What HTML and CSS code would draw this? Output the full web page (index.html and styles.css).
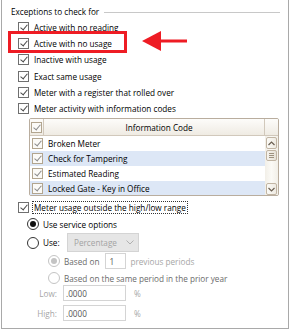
FILE: index.html
```html
<!DOCTYPE html>
<html>
<head>
<meta charset="utf-8">
<link rel="stylesheet" href="styles.css">
</head>
<body>
<div class="panel">
  <div class="group-title">
    <span class="title-text">Exceptions to check for</span>
    <span class="title-line"></span>
  </div>
  <div class="checks">
    <div class="row"><span class="cb"></span><span>Active with no reading</span></div>
    <div class="row"><span class="cb"></span><span>Active with no usage</span></div>
    <div class="row"><span class="cb"></span><span>Inactive with usage</span></div>
    <div class="row"><span class="cb"></span><span>Exact same usage</span></div>
    <div class="row"><span class="cb"></span><span>Meter with a register that rolled over</span></div>
    <div class="row"><span class="cb"></span><span>Meter activity with information codes</span></div>
  </div>
  <div class="grid">
    <div class="grid-head">
      <div class="hcell hcheck"><span class="cb cb-tan"></span></div>
      <div class="hcell hinfo">Information Code</div>
      <div class="hcell hblank"></div>
    </div>
    <div class="grid-body">
      <div class="grid-rows">
        <div class="grow"><span class="gcheck"><span class="cb cb-tan"></span></span><span class="gtext">Broken Meter</span></div>
        <div class="grow alt"><span class="gcheck"><span class="cb cb-tan"></span></span><span class="gtext">Check for Tampering</span></div>
        <div class="grow"><span class="gcheck"><span class="cb cb-tan"></span></span><span class="gtext">Estimated Reading</span></div>
        <div class="grow alt"><span class="gcheck"><span class="cb cb-tan"></span></span><span class="gtext">Locked Gate - Key in Office</span></div>
      </div>
      <div class="vscroll">
        <div class="sbtn"><svg width="7" height="5" viewBox="0 0 7 5"><path d="M0.5 4 L3.5 1 L6.5 4" fill="none" stroke="#6b5f52" stroke-width="1.2"/></svg></div>
        <div class="sthumb"><span></span><span></span><span></span></div>
        <div class="strack"></div>
        <div class="sbtn"><svg width="7" height="5" viewBox="0 0 7 5"><path d="M0.5 1 L3.5 4 L6.5 1" fill="none" stroke="#6b5f52" stroke-width="1.2"/></svg></div>
      </div>
    </div>
  </div>
  <div class="row range"><span class="cb"></span><span class="focus">Meter usage outside the high/low range</span></div>
  <div class="opt opt1"><span class="radio on"></span><span>Use service options</span></div>
  <div class="opt opt2"><span class="radio"></span><span class="use-label">Use:</span>
    <span class="select"><span>Percentage</span><svg width="8" height="5" viewBox="0 0 8 5"><path d="M0.5 0.5 L4 4 L7.5 0.5" fill="none" stroke="#b0b0b0" stroke-width="1"/></svg></span>
  </div>
  <div class="sub sub1"><span class="radio dis on"></span><span class="dtext">Based on</span><span class="num">1</span><span class="gray">previous periods</span></div>
  <div class="sub sub2"><span class="radio dis"></span><span class="dtext">Based on the same period in the prior year</span></div>
  <div class="lim lim1"><span class="lbl">Low:</span><span class="field">.0000</span><span class="gray pct">%</span></div>
  <div class="lim lim2"><span class="lbl">High:</span><span class="field">.0000</span><span class="gray pct">%</span></div>

  <div class="highlight"></div>
  <svg class="arrow" width="46" height="22" viewBox="0 0 46 22">
    <polygon points="0,11 19,1 19,21" fill="#ee1c24"/>
    <rect x="18" y="9.5" width="27" height="3" fill="#ee1c24"/>
  </svg>
</div>
</body>
</html>
```
FILE: styles.css
```css
* { box-sizing: border-box; }
html, body { margin: 0; padding: 0; background: #fff; }
body {
  width: 291px; height: 332px; overflow: hidden;
  font-family: "Open Sans", "Noto Sans", sans-serif;
  font-size: 8.2px; color: #000;
}
.panel {
  position: relative;
  margin-left: 1px;
  width: 288px; height: 329px;
  border: 1px solid #a9a9a9; border-top: none;
  padding-top: 4px;
}
.group-title {
  display: flex; align-items: center;
  height: 14px; padding-left: 9px;
}
.title-text { white-space: nowrap; }
.title-line {
  flex: 1; margin: 2px 8px 0 5px;
  height: 1px; background: #c8c8c8;
}
.checks { display: flex; flex-direction: column; padding-top: 1.5px; }
.row {
  display: flex; align-items: center; gap: 5px;
  height: 16.2px; padding-left: 16px; white-space: nowrap;
}
.cb {
  position: relative; display: inline-block;
  width: 11px; height: 11px; flex: 0 0 11px;
  border: 1px solid #6f6f6f; background: #fff;
}
.cb::after {
  content: ""; position: absolute;
  left: 3px; top: 0px; width: 3px; height: 6px;
  border: solid #4a4a4a; border-width: 0 1.2px 1.2px 0;
  transform: rotate(40deg);
}
.cb-tan { border-color: #b2a58f; background: #fbfaf7; }
.cb-tan::after { border-color: #8b8b8b; }

.grid {
  margin: 1.5px 0 0 27px;
  width: 250px; height: 78px;
  border: 1px solid #b9ad9e;
  border-radius: 2px;
  display: flex; flex-direction: column;
  overflow: hidden;
}
.grid-head {
  display: flex; height: 17px; flex: 0 0 17px;
  background: linear-gradient(#fdfcfa, #efebe3);
  border-bottom: 1px solid #d1c8bb;
}
.hcell { display: flex; align-items: center; justify-content: center; }
.hcheck { width: 14px; border-right: 1px solid #d1c8bb; }
.hinfo { flex: 1; border-right: 1px solid #d1c8bb; padding-left: 10px; }
.hblank { width: 13px; }
.grid-body { display: flex; flex: 1; }
.grid-rows { flex: 1; display: flex; flex-direction: column; }
.grow { height: 15px; display: flex; align-items: center; white-space: nowrap; }
.grow.alt { background: #dde7f6; }
.gcheck { width: 15px; display: flex; justify-content: center; }
.gtext { padding-left: 3px; }
.vscroll {
  width: 13px; display: flex; flex-direction: column;
  background: linear-gradient(90deg, #f2efe8, #fbfaf6 50%, #f2efe8);
  padding: 1px 0 1px 0;
}
.sbtn {
  height: 12px; margin: 0 1px;
  border: 1px solid #c1b5a4; border-radius: 2px;
  background: linear-gradient(90deg, #fbfaf6, #efebe3);
  display: flex; align-items: center; justify-content: center;
}
.sthumb {
  height: 11px; margin: 1px 1px 0;
  border: 1px solid #c1b5a4; border-radius: 2px;
  background: linear-gradient(90deg, #f6f3ed, #e6e1d7);
  display: flex; flex-direction: column; align-items: center; justify-content: center; gap: 1px;
}
.sthumb span { width: 5px; height: 1px; background: #9d917f; }
.strack { flex: 1; }

.range { margin-top: 3px; }
.focus { outline: 1px dotted #333; outline-offset: 0; padding: 0 1px; margin-left: -1px; }
.opt { display: flex; align-items: center; gap: 4px; padding-left: 25px; white-space: nowrap; }
.opt1 { height: 18px; }
.opt2 { height: 19px; }
.radio {
  position: relative; display: inline-block;
  width: 12px; height: 12px; flex: 0 0 12px;
  border: 1px solid #333; border-radius: 50%; background: #fff;
}
.radio.on::after {
  content: ""; position: absolute; left: 2px; top: 2px;
  width: 6px; height: 6px; border-radius: 50%; background: #111;
}
.radio.dis { border-color: #c4c4c4; }
.radio.dis.on::after { background: #c4c4c4; }
.use-label { width: 20px; }
.select {
  display: inline-flex; align-items: center; justify-content: space-between;
  width: 72px; height: 19px; padding: 0 4px 0 6px;
  background: #e6e6e6; border: 1px solid #d4d4d4; color: #a3a3a3;
}
.sub { display: flex; align-items: center; gap: 4px; padding-left: 46px; white-space: nowrap; height: 16px; }
.sub1 { height: 18px; }
.dtext { color: #6b6b6b; }
.num {
  display: inline-flex; align-items: center;
  width: 21px; height: 16px; padding-left: 3px; margin-left: 2px;
  border: 1px solid #d4d4d4; color: #555; background: #fff;
}
.gray { color: #a6a6a6; }
.lim { display: flex; align-items: center; white-space: nowrap; height: 20px; }
.lim1 { margin-top: -3px; }
.lbl { width: 55px; text-align: right; color: #a6a6a6; padding-right: 0; }
.field {
  margin-left: 6px; width: 63px; height: 16px;
  display: inline-flex; align-items: center; padding-left: 2px;
  border: 1px solid #d4d4d4; color: #555; background: #fff;
}
.pct { margin-left: 8px; }

.highlight {
  position: absolute; left: 6px; top: 31px;
  width: 119px; height: 22px;
  border: 3px solid #ee1c24;
}
.arrow { position: absolute; left: 140px; top: 30px; }
```
